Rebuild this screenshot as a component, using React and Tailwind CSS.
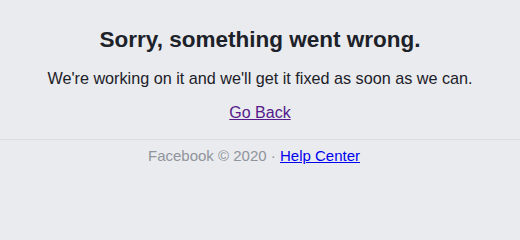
export default function App() {
  return (
    <div className="min-h-screen bg-[#e9ebee] text-[#1d2129] font-['Liberation_Sans',Arial,sans-serif]">
      <div className="pt-[26px] pb-[16px] text-center">
        <h2 className="text-[22.5px] leading-[28px] font-bold">Sorry, something went wrong.</h2>
        <p className="mt-[14px] text-[16.2px] leading-[20px]">
          We're working on it and we'll get it fixed as soon as we can.
        </p>
        <p className="mt-[15px] text-[16px] leading-[20px]">
          <a href="#" className="text-[#551a8b] underline">Go Back</a>
        </p>
      </div>
      <div className="border-t border-[#dadde1] pt-[6px] pr-[12px] text-center text-[15px] leading-[20px] text-[#90949c]">
        Facebook © 2020 · <a href="#" className="text-[#0000ee] underline">Help Center</a>
      </div>
    </div>
  );
}
